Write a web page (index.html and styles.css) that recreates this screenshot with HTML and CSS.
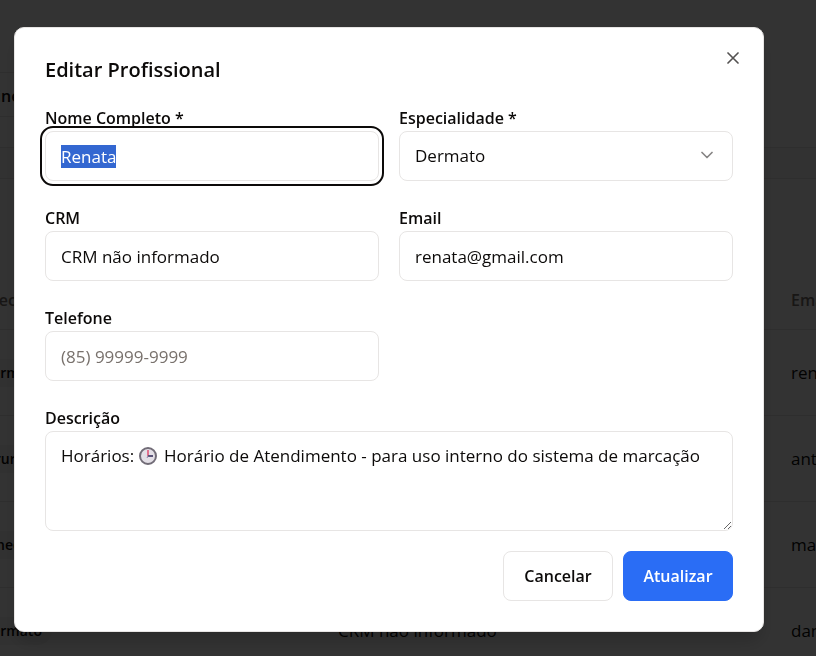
FILE: index.html
```html
<!DOCTYPE html>
<html lang="pt-BR">
<head>
  <meta charset="utf-8">
  <title>Editar Profissional</title>
  <link rel="stylesheet" href="styles.css">
</head>
<body>
  <main class="page" aria-hidden="true">
    <div class="crumb">Cline</div>
    <div class="spacer"></div>
    <div class="strip"></div>
    <table class="staff">
      <thead>
        <tr><th class="col-specialty">Especialidade</th><th class="col-crm">CRM</th><th>Email</th></tr>
      </thead>
      <tbody>
        <tr><td><span class="badge">Dermato</span></td><td>CRM não informado</td><td>renata@gmail.com</td></tr>
        <tr><td><span class="badge">Cirurgia</span></td><td>CRM não informado</td><td>antonio@gmail.com</td></tr>
        <tr><td><span class="badge">Gineco</span></td><td>CRM não informado</td><td>maria@gmail.com</td></tr>
        <tr><td><span class="badge">Dermato</span></td><td>CRM não informado</td><td>daniel@gmail.com</td></tr>
      </tbody>
    </table>
  </main>

  <div class="overlay">
    <section class="dialog" role="dialog" aria-modal="true" aria-labelledby="dialog-title">
      <h2 id="dialog-title" class="title">Editar Profissional</h2>
      <button class="close" type="button" aria-label="Fechar">
        <svg class="icon" viewBox="0 0 24 24"><path d="M18 6 6 18M6 6l12 12"/></svg>
      </button>
      <form class="form">
        <div class="field">
          <label for="name">Nome Completo *</label>
          <input class="control" id="name" type="text" value="Renata">
        </div>
        <div class="field">
          <label for="specialty">Especialidade *</label>
          <div class="anchor">
            <select class="control" id="specialty"><option>Dermato</option></select>
            <svg class="icon chevron" viewBox="0 0 24 24"><path d="m6 9 6 6 6-6"/></svg>
          </div>
        </div>
        <div class="field">
          <label for="crm">CRM</label>
          <input class="control" id="crm" type="text" value="CRM não informado">
        </div>
        <div class="field">
          <label for="email">Email</label>
          <input class="control" id="email" type="email" value="renata@gmail.com">
        </div>
        <div class="field">
          <label for="phone">Telefone</label>
          <input class="control" id="phone" type="tel" placeholder="(85) 99999-9999">
        </div>
        <div class="field wide">
          <label for="description">Descrição</label>
          <div class="anchor">
            <textarea class="control area" id="description">Horários: 🕒 Horário de Atendimento - para uso interno do sistema de marcação</textarea>
            <svg class="clock" viewBox="0 0 24 24">
              <rect width="24" height="24" fill="#fff"/>
              <circle cx="12" cy="12" r="8" fill="#e3dfe6" stroke="#716c77" stroke-width="2"/>
              <path d="M12 12V6" stroke="#e2718f" stroke-width="2"/>
              <path d="M12 12h5" stroke="#5a5378" stroke-width="2"/>
              <path d="m12 12-1 2" stroke="#8d83a8" stroke-width="1"/>
            </svg>
          </div>
        </div>
        <div class="actions">
          <button class="btn btn-outline" type="button">Cancelar</button>
          <button class="btn btn-primary" type="submit">Atualizar</button>
        </div>
      </form>
    </section>
  </div>
  <script src="main.js"></script>
</body>
</html>
```
FILE: styles.css
```css
* {
  box-sizing: border-box;
}

body {
  margin: 0;
  min-height: 100vh;
  overflow: hidden;
  background: #fff;
  color: #0c0a09;
  font: 16px/24px "Segoe UI", "Open Sans", "Noto Sans", sans-serif;
}

.page {
  margin-left: -28px;
  overflow: hidden;
}

.crumb {
  margin-top: 72px;
  width: 80px;
  height: 45px;
  border: solid #e7e5e4;
  border-width: 1px 0;
  padding: 11px 0 0 10px;
  line-height: 24px;
  font-weight: 600;
}

.spacer {
  height: 30px;
}

.strip {
  height: 32px;
  border: solid #e7e5e4;
  border-width: 1px 0;
  background: #fafaf9;
}

.staff {
  width: 100%;
  table-layout: fixed;
  border-collapse: collapse;
  text-align: left;
  white-space: nowrap;
}

.staff th {
  height: 150px;
  padding: 0 0 17px;
  overflow: hidden;
  vertical-align: bottom;
  color: #78716c;
  font-weight: 600;
}

.staff td {
  height: 86px;
  padding: 2px 0 0;
  overflow: hidden;
  font-size: 17px;
}

.staff tr {
  border-bottom: 1px solid #e7e5e4;
}

.col-specialty {
  width: 366px;
}

.col-crm {
  width: 453px;
}

.badge {
  display: inline-block;
  padding: 2px 10px;
  border-radius: 14px;
  background: #f5f5f4;
  font-size: 14px;
  font-weight: 600;
}

.overlay {
  position: fixed;
  inset: 0;
  display: flex;
  align-items: flex-start;
  padding: 27px 52px 24px 14px;
  background: rgba(0, 0, 0, 0.8);
}

.dialog {
  position: relative;
  flex: 1;
  padding: 30px;
  border: 1px solid #e7e5e4;
  border-radius: 10px;
  background: #fff;
  box-shadow: 0 12px 18px -4px rgba(0, 0, 0, 0.2);
}

.title {
  margin: 0 0 23px;
  font-size: 20px;
  line-height: 24px;
  font-weight: 600;
}

.icon {
  display: block;
  width: 20px;
  height: 20px;
  fill: none;
  stroke: currentColor;
  stroke-width: 2;
  stroke-linecap: round;
  stroke-linejoin: round;
}

.close {
  position: absolute;
  top: 20px;
  right: 20px;
  padding: 0;
  border: 0;
  background: none;
  color: inherit;
  opacity: 0.7;
}

.form {
  display: grid;
  grid-template-columns: 1fr 1fr;
  column-gap: 20px;
  row-gap: 24px;
}

.field label {
  display: block;
  line-height: 26px;
  font-weight: 600;
}

.anchor {
  position: relative;
}

.control {
  display: block;
  width: 100%;
  height: 50px;
  margin: 0;
  padding: 0 15px;
  border: 1px solid #e7e5e4;
  border-radius: 8px;
  background: #fff;
  color: inherit;
  font: inherit;
  font-size: 17px;
  appearance: none;
}

.control::placeholder {
  color: #78716c;
  opacity: 1;
}

.control:focus {
  outline: 2px solid #0c0a09;
  outline-offset: 3px;
}

.control::selection {
  background: #3367d1;
  color: #fff;
}

.chevron {
  position: absolute;
  top: 14px;
  right: 16px;
  opacity: 0.5;
  pointer-events: none;
}

.clock {
  position: absolute;
  top: 13px;
  left: 91px;
  width: 24px;
  height: 24px;
  pointer-events: none;
}

.wide,
.actions {
  grid-column: 1 / -1;
}

.area {
  height: 100px;
  padding: 12px 15px;
  resize: vertical;
}

.actions {
  display: flex;
  justify-content: flex-end;
  gap: 10px;
  margin-top: -4px;
}

.btn {
  width: 110px;
  height: 50px;
  padding: 0;
  border: 1px solid #e7e5e4;
  border-radius: 8px;
  background: #fff;
  color: inherit;
  font: inherit;
  font-weight: 600;
}

.btn-primary {
  border-color: #2a6df5;
  background: #2a6df5;
  color: #fff;
}
```
FILE: main.js
```js
const nameField = document.getElementById("name");
nameField.focus();
nameField.select();
```
